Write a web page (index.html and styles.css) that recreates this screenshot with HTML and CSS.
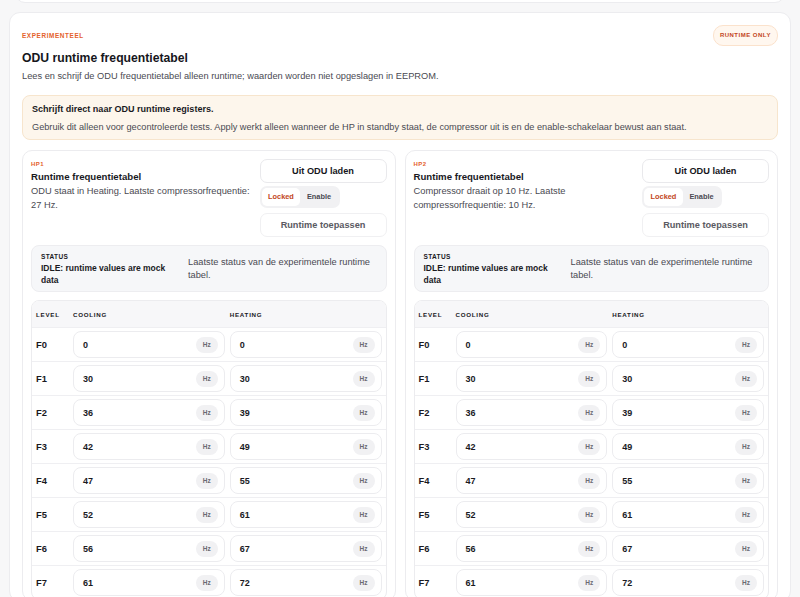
FILE: index.html
```html
<!DOCTYPE html>
<html>
<head>
    <link rel="stylesheet" href="styles.css">
</head>
<body>
    <div class="prev-card"></div>
    <div class="card">
        <div class="card-head">
            <span class="eyebrow">Experimenteel</span>
            <span class="pill">Runtime only</span>
        </div>
        <h1>ODU runtime frequentietabel</h1>
        <p class="lead">Lees en schrijf de ODU frequentietabel alleen runtime; waarden worden niet opgeslagen in EEPROM.</p>

        <div class="warning">
            <strong>Schrijft direct naar ODU runtime registers.</strong>
            <p>Gebruik dit alleen voor gecontroleerde tests. Apply werkt alleen wanneer de HP in standby staat, de compressor uit is en de enable-schakelaar bewust aan staat.</p>
        </div>

        <div class="units">
            <!-- HP1 -->
            <div class="unit">
                <div class="unit-top">
                    <div class="unit-info">
                        <span class="eyebrow small">HP1</span>
                        <h2>Runtime frequentietabel</h2>
                        <p>ODU staat in Heating. Laatste compressorfrequentie: 27 Hz.</p>
                    </div>
                    <div class="unit-actions">
                        <button class="btn">Uit ODU laden</button>
                        <div class="toggle">
                            <span class="toggle-opt active">Locked</span>
                            <span class="toggle-opt">Enable</span>
                        </div>
                        <button class="btn muted">Runtime toepassen</button>
                    </div>
                </div>
                <div class="status">
                    <div>
                        <span class="status-label">Status</span>
                        <strong>IDLE: runtime values are mock data</strong>
                    </div>
                    <p>Laatste status van de experimentele runtime tabel.</p>
                </div>
                <div class="freq-table">
                    <div class="row head"><span>Level</span><span>Cooling</span><span>Heating</span></div>
                    <div class="row"><span class="lvl">F0</span><div class="field"><span>0</span><em>Hz</em></div><div class="field"><span>0</span><em>Hz</em></div></div>
                    <div class="row"><span class="lvl">F1</span><div class="field"><span>30</span><em>Hz</em></div><div class="field"><span>30</span><em>Hz</em></div></div>
                    <div class="row"><span class="lvl">F2</span><div class="field"><span>36</span><em>Hz</em></div><div class="field"><span>39</span><em>Hz</em></div></div>
                    <div class="row"><span class="lvl">F3</span><div class="field"><span>42</span><em>Hz</em></div><div class="field"><span>49</span><em>Hz</em></div></div>
                    <div class="row"><span class="lvl">F4</span><div class="field"><span>47</span><em>Hz</em></div><div class="field"><span>55</span><em>Hz</em></div></div>
                    <div class="row"><span class="lvl">F5</span><div class="field"><span>52</span><em>Hz</em></div><div class="field"><span>61</span><em>Hz</em></div></div>
                    <div class="row"><span class="lvl">F6</span><div class="field"><span>56</span><em>Hz</em></div><div class="field"><span>67</span><em>Hz</em></div></div>
                    <div class="row"><span class="lvl">F7</span><div class="field"><span>61</span><em>Hz</em></div><div class="field"><span>72</span><em>Hz</em></div></div>
                </div>
            </div>

            <!-- HP2 -->
            <div class="unit">
                <div class="unit-top">
                    <div class="unit-info">
                        <span class="eyebrow small">HP2</span>
                        <h2>Runtime frequentietabel</h2>
                        <p>Compressor draait op 10 Hz. Laatste compressorfrequentie: 10 Hz.</p>
                    </div>
                    <div class="unit-actions">
                        <button class="btn">Uit ODU laden</button>
                        <div class="toggle">
                            <span class="toggle-opt active">Locked</span>
                            <span class="toggle-opt">Enable</span>
                        </div>
                        <button class="btn muted">Runtime toepassen</button>
                    </div>
                </div>
                <div class="status">
                    <div>
                        <span class="status-label">Status</span>
                        <strong>IDLE: runtime values are mock data</strong>
                    </div>
                    <p>Laatste status van de experimentele runtime tabel.</p>
                </div>
                <div class="freq-table">
                    <div class="row head"><span>Level</span><span>Cooling</span><span>Heating</span></div>
                    <div class="row"><span class="lvl">F0</span><div class="field"><span>0</span><em>Hz</em></div><div class="field"><span>0</span><em>Hz</em></div></div>
                    <div class="row"><span class="lvl">F1</span><div class="field"><span>30</span><em>Hz</em></div><div class="field"><span>30</span><em>Hz</em></div></div>
                    <div class="row"><span class="lvl">F2</span><div class="field"><span>36</span><em>Hz</em></div><div class="field"><span>39</span><em>Hz</em></div></div>
                    <div class="row"><span class="lvl">F3</span><div class="field"><span>42</span><em>Hz</em></div><div class="field"><span>49</span><em>Hz</em></div></div>
                    <div class="row"><span class="lvl">F4</span><div class="field"><span>47</span><em>Hz</em></div><div class="field"><span>55</span><em>Hz</em></div></div>
                    <div class="row"><span class="lvl">F5</span><div class="field"><span>52</span><em>Hz</em></div><div class="field"><span>61</span><em>Hz</em></div></div>
                    <div class="row"><span class="lvl">F6</span><div class="field"><span>56</span><em>Hz</em></div><div class="field"><span>67</span><em>Hz</em></div></div>
                    <div class="row"><span class="lvl">F7</span><div class="field"><span>61</span><em>Hz</em></div><div class="field"><span>72</span><em>Hz</em></div></div>
                </div>
            </div>
        </div>
    </div>
</body>
</html>
```

FILE: styles.css
```css
body {
    font-family: "Liberation Sans", Arial, sans-serif;
    margin: 0;
    padding: 0 9px;
    background-color: #f7f7f8;
    color: #1a1a1f;
    overflow: hidden;
}
.prev-card {
    margin: -20px 6px 0;
    height: 21px;
    background-color: #fff;
    border: 1px solid #ececef;
    border-radius: 10px;
}
.card {
    margin-top: 9px;
    background-color: #fff;
    border: 1px solid #ececef;
    border-radius: 11px;
    padding: 12px 12px 0;
}
.card-head {
    display: flex;
    justify-content: space-between;
    align-items: center;
    height: 20px;
}
.eyebrow {
    color: #e4612b;
    font-size: 6.4px;
    font-weight: bold;
    letter-spacing: 0.6px;
    text-transform: uppercase;
}
.pill {
    color: #c2461c;
    background-color: #fff7ef;
    border: 1px solid #fbe2cc;
    border-radius: 10px;
    padding: 0 6px;
    height: 19px;
    line-height: 19px;
    font-size: 6px;
    font-weight: bold;
    letter-spacing: 0.5px;
    text-transform: uppercase;
}
h1 {
    margin: 4px 0 0;
    font-size: 12.2px;
    line-height: 18px;
    color: #16161c;
}
.lead {
    margin: 1px 0 0;
    font-size: 9.25px;
    line-height: 16px;
    color: #4a4a52;
}
.warning {
    margin-top: 11px;
    background-color: #fdf6ec;
    border: 1px solid #f7e5cd;
    border-radius: 8px;
    padding: 7px 9px 5px;
}
.warning strong {
    display: block;
    font-size: 9.05px;
    line-height: 13px;
    margin-bottom: 4px;
}
.warning p {
    margin: 0;
    font-size: 9.2px;
    line-height: 14px;
    color: #4a4a52;
}
.units {
    margin-top: 10px;
    display: grid;
    grid-template-columns: 1fr 1fr;
    gap: 9px;
}
.unit {
    border: 1px solid #ececef;
    border-radius: 10px;
    padding: 8px 8px 0;
}
.unit-top {
    display: flex;
    gap: 7px;
}
.unit-info {
    flex: 1;
}
.eyebrow.small {
    display: block;
    font-size: 6px;
    letter-spacing: 0.5px;
    line-height: 10px;
}
h2 {
    margin: 1px 0 0;
    font-size: 9.65px;
    line-height: 14px;
}
.unit-info p {
    margin: 0;
    font-size: 9.3px;
    line-height: 14px;
    color: #4a4a52;
}
.unit-actions {
    width: 127px;
    display: flex;
    flex-direction: column;
    align-items: flex-start;
}
.btn {
    width: 127px;
    height: 24px;
    background-color: #fff;
    border: 1px solid #e9e9ec;
    border-radius: 7px;
    font-family: inherit;
    font-size: 9.2px;
    font-weight: bold;
    color: #16161c;
}
.btn.muted {
    color: #5a5a62;
    border-color: #f0f0f2;
}
.toggle {
    margin: 3px 0 5px;
    display: flex;
    padding: 2px;
    background-color: #f1f1f3;
    border-radius: 7px;
}
.toggle-opt {
    padding: 0 6.5px;
    height: 18px;
    line-height: 18px;
    font-size: 7.4px;
    font-weight: bold;
    color: #4a4a52;
    border-radius: 5px;
}
.toggle-opt.active {
    background-color: #fff;
    color: #c2461c;
}
.status {
    margin-top: 8px;
    display: grid;
    grid-template-columns: 140px 1fr;
    gap: 7px;
    align-items: center;
    background-color: #f6f7f9;
    border: 1px solid #ededf0;
    border-radius: 8px;
    padding: 6px 9px 5px;
}
.status-label {
    display: block;
    font-size: 6.5px;
    line-height: 10px;
    font-weight: bold;
    letter-spacing: 0.35px;
    text-transform: uppercase;
}
.status strong {
    display: block;
    font-size: 8.5px;
    line-height: 12px;
}
.status p {
    margin: 0;
    font-size: 9.25px;
    line-height: 13px;
    color: #4a4a52;
}
.freq-table {
    margin-top: 8px;
    border: 1px solid #ececef;
    border-radius: 8px;
    overflow: hidden;
}
.row {
    display: grid;
    grid-template-columns: 32px 1fr 1fr;
    column-gap: 5px;
    align-items: center;
    padding: 3px 4px;
    border-top: 1px solid #efeff2;
}
.row.head {
    border-top: none;
    height: 26px;
    padding: 0 4px;
    background-color: #f7f7f9;
    font-size: 6.2px;
    font-weight: bold;
    letter-spacing: 0.75px;
    text-transform: uppercase;
}
.lvl {
    font-size: 9.4px;
    font-weight: bold;
}
.field {
    height: 27px;
    box-sizing: border-box;
    border: 1px solid #ececef;
    border-radius: 8px;
    display: flex;
    justify-content: space-between;
    align-items: center;
    padding: 0 6px 0 9px;
    font-size: 9px;
    font-weight: bold;
}
.field em {
    font-style: normal;
    font-size: 6.5px;
    font-weight: bold;
    color: #6a6a72;
    background-color: #f1f1f3;
    border-radius: 8px;
    width: 22px;
    height: 16px;
    line-height: 16px;
    text-align: center;
}
```
